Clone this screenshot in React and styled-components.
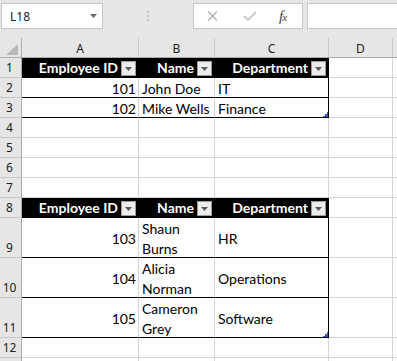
import styled, { createGlobalStyle } from "styled-components"

const GlobalStyle = createGlobalStyle`
    html, body {
        margin: 0;
        padding: 0;
        background: #fff;
        overflow: hidden;
    }
    body {
        font-family: Lato, "Liberation Sans", sans-serif;
    }
`

const COLUMNS = ["A", "B", "C", "D", ""]

// row 13 only peeks in at the bottom edge, its number is out of view
const ROWS = [
    { n: 1, head: true },
    { n: 2, cells: ["101", "John Doe", "IT"] },
    { n: 3, cells: ["102", "Mike Wells", "Finance"], last: true },
    { n: 4 },
    { n: 5 },
    { n: 6 },
    { n: 7 },
    { n: 8, head: true },
    { n: 9, h: 40, cells: ["103", ["Shaun", "Burns"], "HR"] },
    { n: 10, h: 40, cells: ["104", ["Alicia", "Norman"], "Operations"] },
    { n: 11, h: 40, cells: ["105", ["Cameron", "Grey"], "Software"], last: true },
    { n: 12 },
    { n: 13, hidden: true },
]

const HEADERS = ["Employee ID", "Name", "Department"]

const Page = styled.div`
    width: 397px;
    height: 361px;
    overflow: hidden;
`

const TopBar = styled.div`
    height: 38px;
    box-sizing: border-box;
    padding-top: 3px;
    background: #e6e6e6;
    display: flex;
    align-items: flex-start;
`

const Box = styled.div`
    height: 26px;
    box-sizing: border-box;
    background: #fff;
    border: 1px solid #c6c6c6;
    display: flex;
    align-items: center;
`

const NameBox = styled(Box)`
    margin-left: 1px;
    width: 102px;
    justify-content: space-between;
    padding: 0 5px 0 8px;
    font: 12px "Noto Sans", sans-serif;
    color: #222;
`

const Dots = styled.div`
    flex: 1;
    height: 26px;
    display: flex;
    flex-direction: column;
    align-items: center;
    justify-content: center;
    gap: 2px;

    span {
        width: 2px;
        height: 2px;
        background: #c4c4c4;
    }
`

const FuncBox = styled(Box)`
    width: 110px;
`

const IconSlot = styled.div`
    width: ${(p) => p.$w}px;
    display: flex;
    justify-content: center;
    align-items: center;
`

const Fx = styled.span`
    font-family: "Liberation Serif", serif;
    font-style: italic;
    font-size: 15px;
    color: #444;
    letter-spacing: -1px;

    small {
        font-size: 11px;
    }
`

const FormulaInput = styled(Box)`
    margin-left: 4px;
    flex: 1;
    border-right: none;
`

const Sheet = styled.div`
    display: grid;
    grid-template-columns: 22px 117px 76px 114px 64px 1fr;
`

const Corner = styled.div`
    height: 20px;
    box-sizing: border-box;
    background: #e6e6e6;
    border-right: 1px solid #ababab;
    border-bottom: 1px solid #ababab;
    display: flex;
    justify-content: flex-end;
    align-items: flex-end;
    padding: 0 3px 2px 0;
`

const ColHead = styled.div`
    height: 20px;
    box-sizing: border-box;
    background: #e6e6e6;
    border-right: 1px solid #c8c8c8;
    border-bottom: 1px solid #ababab;
    display: flex;
    align-items: center;
    justify-content: center;
    padding-top: 1px;
    font: 12px "Noto Sans", sans-serif;
    color: #222;
`

const RowHead = styled.div`
    height: ${(p) => p.$h}px;
    box-sizing: border-box;
    background: #e6e6e6;
    border-right: 1px solid #ababab;
    border-bottom: 1px solid #c8c8c8;
    display: flex;
    align-items: flex-end;
    justify-content: center;
    padding-right: 2px;
    font: 12px/19px "Noto Sans", sans-serif;
    color: #222;
`

const Cell = styled.div`
    position: relative;
    height: ${(p) => p.$h}px;
    box-sizing: border-box;
    padding: 3px 2px 0 3px;
    background: ${(p) => (p.$head ? "#000" : "#fff")};
    color: ${(p) => (p.$head ? "#fff" : "#000")};
    font-weight: ${(p) => (p.$head ? 700 : 400)};
    border-right: 1px solid ${(p) => (p.$head || p.$edge ? "#000" : "#d4d4d4")};
    border-bottom: 1px solid ${(p) => (p.$table ? "#000" : "#d4d4d4")};
    display: flex;
    align-items: center;
    justify-content: ${(p) => (p.$right ? "flex-end" : "flex-start")};
    font-size: 14px;
    line-height: 20px;
    white-space: nowrap;
`

const HeadCell = styled(Cell)`
    padding-top: 1px;
`

const Lines = styled.span`
    display: flex;
    flex-direction: column;
`

const FilterButton = styled.span`
    width: 15px;
    height: 15px;
    box-sizing: border-box;
    margin: 1px 0 0 3px;
    background: #ececec;
    border: 1px solid #9c9c9c;
    display: flex;
    align-items: center;
    justify-content: center;
`

const ResizeMark = styled.svg`
    position: absolute;
    right: 0;
    bottom: 0;
`

const DownTriangle = ({ w = 7, h = 4, color = "#666" }) => (
    <svg width={w} height={h} viewBox={`0 0 ${w} ${h}`}>
        <path d={`M0 0H${w}L${w / 2} ${h}Z`} fill={color} />
    </svg>
)

const HeaderRow = ({ n }) => (
    <>
        <RowHead $h={20}>{n}</RowHead>
        {HEADERS.map((title) => (
            <HeadCell key={title} $h={20} $head $table $right>
                {title}
                <FilterButton>
                    <DownTriangle w={7} h={4} color="#5a5a5a" />
                </FilterButton>
            </HeadCell>
        ))}
        <Cell $h={20} />
        <Cell $h={20} />
    </>
)

const DataRow = ({ row }) => {
    const h = row.h || 20
    return (
        <>
            <RowHead $h={h}>{row.hidden ? "" : row.n}</RowHead>
            {row.cells ? (
                row.cells.map((value, i) => (
                    <Cell key={i} $h={h} $table $edge={i === 2} $right={i === 0}>
                        {Array.isArray(value) ? (
                            <Lines>
                                {value.map((line) => (
                                    <span key={line}>{line}</span>
                                ))}
                            </Lines>
                        ) : (
                            value
                        )}
                        {row.last && i === 2 && (
                            <ResizeMark width="5" height="5" viewBox="0 0 5 5">
                                <path d="M4 0H5V5H0V4H2V2H4Z" fill="#3d51c2" />
                            </ResizeMark>
                        )}
                    </Cell>
                ))
            ) : (
                <>
                    <Cell $h={h} />
                    <Cell $h={h} />
                    <Cell $h={h} />
                </>
            )}
            <Cell $h={h} />
            <Cell $h={h} />
        </>
    )
}

const App = () => {
    return (
        <Page>
            <GlobalStyle />
            <TopBar>
                <NameBox>
                    L18
                    <DownTriangle w={7} h={4} color="#6a6a6a" />
                </NameBox>
                <Dots>
                    <span />
                    <span />
                    <span />
                </Dots>
                <FuncBox>
                    <IconSlot $w={38}>
                        <svg width="11" height="10" viewBox="0 0 11 10">
                            <path d="M1 0.5L10 9.5M10 0.5L1 9.5" stroke="#b4b4b4" strokeWidth="1.4" />
                        </svg>
                    </IconSlot>
                    <IconSlot $w={36}>
                        <svg width="14" height="10" viewBox="0 0 14 10">
                            <path d="M1 5L5 9L13 1" stroke="#bdbdbd" strokeWidth="1.6" fill="none" />
                        </svg>
                    </IconSlot>
                    <IconSlot $w={30}>
                        <Fx>
                            f<small>x</small>
                        </Fx>
                    </IconSlot>
                </FuncBox>
                <FormulaInput />
            </TopBar>
            <Sheet>
                <Corner>
                    <svg width="12" height="11" viewBox="0 0 12 11">
                        <path d="M12 0V11H0Z" fill="#b9b9b9" />
                    </svg>
                </Corner>
                {COLUMNS.map((c, i) => (
                    <ColHead key={i}>{c}</ColHead>
                ))}
                {ROWS.map((row) =>
                    row.head ? <HeaderRow key={row.n} n={row.n} /> : <DataRow key={row.n} row={row} />
                )}
            </Sheet>
        </Page>
    )
}

export default App
